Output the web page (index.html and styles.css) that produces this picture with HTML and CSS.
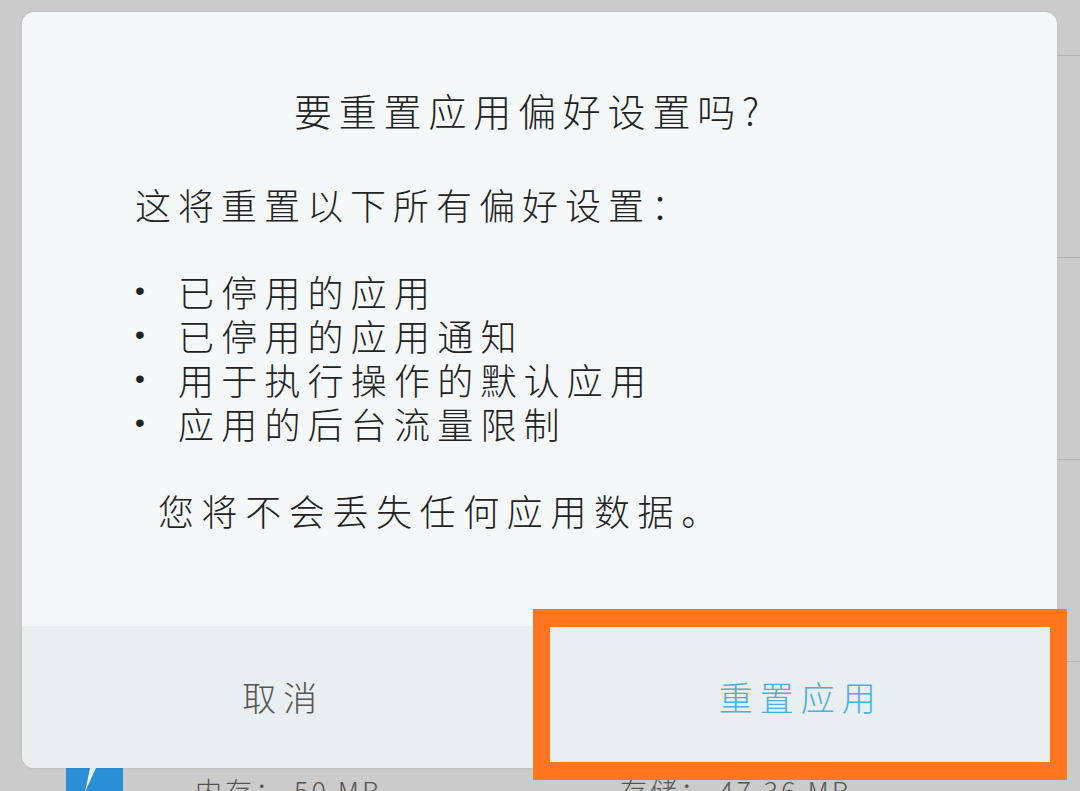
FILE: index.html
```html
<!DOCTYPE html>
<html lang="zh-CN">
<head>
<meta charset="utf-8">
<title>要重置应用偏好设置吗？</title>
<link rel="stylesheet" href="styles.css">
</head>
<body>
<div class="screen">
  <div class="list">
    <div class="row row-first"></div>
    <div class="row"></div>
    <div class="row"></div>
    <div class="row"></div>
    <div class="app">
      <svg class="app-icon" viewBox="0 0 57 60" aria-hidden="true">
        <rect width="57" height="60" fill="#2b8fd6"/>
        <path d="M30 0 L24 0 L19 24 Z" fill="#e8f3fa"/>
      </svg>
      <span class="stat stat-mem">内存： 50 MB</span>
      <span class="stat stat-store">存储： 47.36 MB</span>
    </div>
  </div>
  <div class="dialog">
    <div class="content">
      <h1 class="title">要重置应用偏好设置吗?</h1>
      <p class="lead">这将重置以下所有偏好设置：</p>
      <ul class="items">
        <li><span class="dot">•</span>已停用的应用</li>
        <li><span class="dot">•</span>已停用的应用通知</li>
        <li><span class="dot">•</span>用于执行操作的默认应用</li>
        <li><span class="dot">•</span>应用的后台流量限制</li>
      </ul>
      <p class="note">您将不会丢失任何应用数据。</p>
    </div>
    <div class="actions">
      <button class="action action-cancel">取消</button>
      <button class="action action-confirm">重置应用</button>
    </div>
  </div>
  <div class="highlight"></div>
</div>
</body>
</html>
```
FILE: styles.css
```css
* { box-sizing: border-box; }
html, body { margin: 0; padding: 0; }
body { background: #cbcbcb; font-family: "Noto Sans CJK SC", "Noto Sans", sans-serif; }
.screen { position: relative; width: 1080px; height: 791px; overflow: hidden; background: #cbcbcb; }

.list { display: flex; flex-direction: column; }
.row { height: 202px; margin-left: 66px; border-bottom: 1px solid #b4b4b4; flex: none; }
.row-first { height: 56px; }
.app { display: flex; padding: 0 0 0 66px; height: 131px; margin-top: 106px; position: relative; }
.app-icon { width: 57px; height: 60px; flex: none; }
.stat { font-size: 27px; line-height: 30px; color: #555; font-weight: 300; letter-spacing: 3px; margin-top: 8px; white-space: nowrap; }
.stat-mem { margin-left: 72px; width: 425px; }

.dialog {
  position: absolute; left: 22px; top: 12px; width: 1035px; height: 756px;
  background: #f4f8f9; border-radius: 12px; overflow: hidden;
  display: flex; flex-direction: column;
  box-shadow: 0 0 3px rgba(0, 0, 0, .1);
}
.content { flex: 1; padding: 70px 0 0 113px; color: #222; font-weight: 300; }
.title { margin: 0 0 0 159px; font-size: 38px; line-height: 56px; font-weight: 300; letter-spacing: 6.8px; white-space: nowrap; }
.lead { margin: 41px 0 0; font-size: 36px; line-height: 50px; letter-spacing: 7px; }
.items { list-style: none; margin: 40px 0 0; padding: 0; }
.items li { display: flex; font-size: 36px; line-height: 44px; letter-spacing: 7.2px; }
.dot { width: 43px; flex: none; font-family: "Liberation Sans", sans-serif; font-size: 28px; }
.note { margin: 40px 0 0 23px; font-size: 36px; line-height: 50px; letter-spacing: 7.6px; }

.actions { height: 142px; flex: none; display: flex; background: #e9eef1; }
.action {
  flex: 1; border: 0; background: none; padding: 0 0 2px 5px; margin: 0; font: inherit;
  font-size: 34px; font-weight: 300; letter-spacing: 7px;
}
.action-cancel { color: #555; }
.action-confirm { color: #4cb0dd; }

.highlight {
  position: absolute; left: 533px; top: 609px; width: 534px; height: 171px;
  border: 18px solid #ff7621; border-left-width: 17px; border-right-width: 17px;
}
```
